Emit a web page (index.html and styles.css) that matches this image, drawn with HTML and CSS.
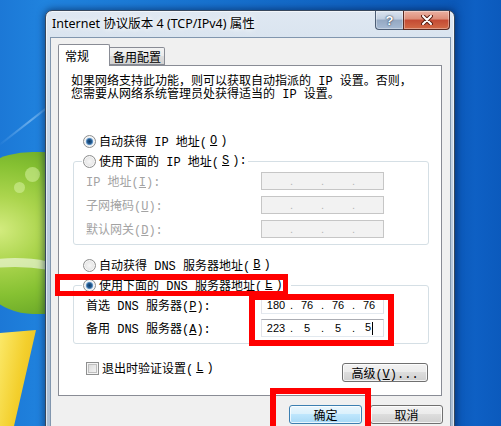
FILE: index.html
```html
<!DOCTYPE html>
<html lang="zh-CN">
<head>
    <meta charset="UTF-8">
    <title>Internet 协议版本 4 (TCP/IPv4) 属性</title>
    <link rel="stylesheet" href="styles.css">
</head>
<body>
    <div class="desktop">
        <!-- wallpaper pieces seen left of the window -->
        <div class="wallpaper">
            <div class="wp-streak"></div>
            <div class="wp-green"></div>
            <div class="wp-bubble b1"></div>
            <div class="wp-bubble b2"></div>
            <div class="wp-swirl"></div>
            <div class="wp-yellow"></div>
        </div>

        <div class="window">
            <div class="titlebar">
                <span class="title">Internet 协议版本 4 (TCP/IPv4) 属性</span>
                <div class="caption-buttons">
                    <button class="cap help">?</button>
                    <button class="cap close">
                        <svg width="12" height="10" viewBox="0 0 12 10">
                            <path d="M2 1 L10 9 M10 1 L2 9" stroke="#5a1e12" stroke-width="4" stroke-linecap="round"/>
                            <path d="M2 1 L10 9 M10 1 L2 9" stroke="#fff" stroke-width="2" stroke-linecap="round"/>
                        </svg>
                    </button>
                </div>
            </div>

            <div class="client">
                <div class="tabs">
                    <div class="tab active">常规</div>
                    <div class="tab">备用配置</div>
                </div>

                <div class="panel">
                    <p class="intro">如果网络支持此功能，则可以获取自动指派的 IP 设置。否则，<br>您需要从网络系统管理员处获得适当的 IP 设置。</p>

                    <label class="opt"><span class="radio on"></span>自动获得 IP 地址(<u>O</u>)</label>

                    <fieldset class="group">
                        <legend><label class="opt"><span class="radio"></span>使用下面的 IP 地址(<u>S</u>):</label></legend>
                        <div class="row disabled">
                            <span class="lbl">IP 地址(<u>I</u>):</span>
                            <span class="ip"><span class="seg"></span><span class="sep">.</span><span class="seg"></span><span class="sep">.</span><span class="seg"></span><span class="sep">.</span><span class="seg"></span></span>
                        </div>
                        <div class="row disabled">
                            <span class="lbl">子网掩码(<u>U</u>):</span>
                            <span class="ip"><span class="seg"></span><span class="sep">.</span><span class="seg"></span><span class="sep">.</span><span class="seg"></span><span class="sep">.</span><span class="seg"></span></span>
                        </div>
                        <div class="row disabled">
                            <span class="lbl">默认网关(<u>D</u>):</span>
                            <span class="ip"><span class="seg"></span><span class="sep">.</span><span class="seg"></span><span class="sep">.</span><span class="seg"></span><span class="sep">.</span><span class="seg"></span></span>
                        </div>
                    </fieldset>

                    <label class="opt opt-dns"><span class="radio"></span>自动获得 DNS 服务器地址(<u>B</u>)</label>

                    <fieldset class="group group-dns">
                        <legend><label class="opt"><span class="radio on"></span>使用下面的 DNS 服务器地址(<u>E</u>):</label></legend>
                        <div class="row">
                            <span class="lbl">首选 DNS 服务器(<u>P</u>):</span>
                            <span class="ip"><span class="seg">180</span><span class="sep">.</span><span class="seg">76</span><span class="sep">.</span><span class="seg">76</span><span class="sep">.</span><span class="seg">76</span></span>
                        </div>
                        <div class="row">
                            <span class="lbl">备用 DNS 服务器(<u>A</u>):</span>
                            <span class="ip"><span class="seg">223</span><span class="sep">.</span><span class="seg">5</span><span class="sep">.</span><span class="seg">5</span><span class="sep">.</span><span class="seg">5<i class="caret"></i></span></span>
                        </div>
                    </fieldset>

                    <div class="panel-foot">
                        <label class="check-opt"><span class="check"></span>退出时验证设置(<u>L</u>)</label>
                        <button class="btn btn-adv">高级(<u>V</u>)...</button>
                    </div>
                </div>

                <div class="buttons">
                    <button class="btn btn-ok">确定</button>
                    <button class="btn">取消</button>
                </div>
            </div>
        </div>

        <!-- red highlight marks drawn over the screenshot -->
        <div class="mark mark-radio"></div>
        <div class="mark mark-dns"></div>
        <div class="mark mark-ok"></div>
    </div>
</body>
</html>
```

FILE: styles.css
```css
* {
    box-sizing: border-box;
}

body {
    margin: 0;
    font-family: "Liberation Mono", "Noto Sans CJK SC", monospace;
    font-size: 12px;
    color: #000;
}

u {
    text-decoration: underline;
}

.desktop {
    position: relative;
    width: 501px;
    height: 426px;
    overflow: hidden;
    padding: 10px 0 0 45px;
    background: linear-gradient(90deg, #1c78d6 0, #2083de 45px, #0b58b8 455px, #0e60c4 475px, #0b5abd 100%);
}

/* wallpaper */
.wallpaper {
    position: absolute;
    inset: 0;
}

.wp-streak {
    position: absolute;
    left: -10px;
    top: 120px;
    width: 80px;
    height: 2px;
    transform: rotate(-38deg);
    background: linear-gradient(90deg, rgba(255, 255, 255, 0), rgba(190, 225, 255, 0.45), rgba(255, 255, 255, 0));
}

.wp-green {
    position: absolute;
    left: -30px;
    top: 152px;
    width: 140px;
    height: 162px;
    border-radius: 45% 50% 40% 45% / 25% 40% 35% 40%;
    background: radial-gradient(ellipse at 20% 48%, #d4ec80 0, #acd54e 28%, #86c132 55%, #5c9c22 90%);
}

.wp-bubble {
    position: absolute;
    border-radius: 50%;
    background: rgba(215, 242, 160, 0.55);
}

.wp-bubble.b1 {
    left: 25px;
    top: 167px;
    width: 15px;
    height: 15px;
}

.wp-bubble.b2 {
    left: 14px;
    top: 182px;
    width: 11px;
    height: 11px;
}

.wp-swirl {
    position: absolute;
    left: -70px;
    top: 258px;
    width: 170px;
    height: 90px;
    border-radius: 50%;
    border-top: 9px solid rgba(255, 255, 255, 0.55);
}

.wp-yellow {
    position: absolute;
    left: 0;
    top: 330px;
    width: 40px;
    height: 96px;
    clip-path: polygon(0 3px, 36px 0, 14px 96px, 0 96px);
    background: linear-gradient(100deg, #fbe96a 0, #f3cf2c 50%, #e8b51c 100%);
}

/* window */
.window {
    position: relative;
    z-index: 1;
    width: 410px;
    height: 440px;
    border: 1px solid #37475c;
    border-radius: 7px 7px 0 0;
    background: linear-gradient(#dfe8f2, #cad8e7 25%, #b5c7dc 60%, #a8bcd3);
    box-shadow: 0 0 7px 1px rgba(0, 20, 60, 0.55), inset 0 0 0 1px rgba(255, 255, 255, 0.6);
}

.titlebar {
    display: flex;
    justify-content: space-between;
    height: 26px;
}

.title {
    padding-left: 6px;
    line-height: 25px;
    font-family: "Noto Sans", "Noto Sans CJK SC", sans-serif;
    font-size: 12.5px;
    text-shadow: 0 0 5px #fff, 0 0 8px rgba(255, 255, 255, 0.8);
}

.caption-buttons {
    display: flex;
    height: 19px;
    margin-right: 4px;
}

.cap {
    height: 19px;
    padding: 0;
    border: 1px solid #4d5e75;
    border-top: none;
    display: flex;
    align-items: center;
    justify-content: center;
    box-shadow: inset 0 0 0 1px rgba(255, 255, 255, 0.35);
}

.help {
    width: 28px;
    border-radius: 0 0 0 4px;
    border-right: none;
    background: linear-gradient(#dbe4ef 0, #c0cee0 45%, #94a8c2 50%, #a6bad3 100%);
    color: #fff;
    font: bold 13px "Liberation Sans", sans-serif;
    text-shadow: 0 0 2px #2b3d55, 0 0 1px #2b3d55;
}

.close {
    width: 47px;
    border-radius: 0 0 4px 0;
    border-color: #5a2a22;
    background: linear-gradient(#eab1a3 0, #dd8d77 45%, #c44a33 50%, #d26a46 100%);
}

.client {
    margin: 0 3px 0 4px;
    height: 420px;
    padding: 6px 8px 0 7px;
    border: 1px solid #8196ae;
    background: #f0f0f0;
}

/* tabs */
.tabs {
    display: flex;
    align-items: flex-end;
    height: 21px;
}

.tab {
    display: flex;
    align-items: center;
    border: 1px solid #898c95;
    font-family: "Noto Sans CJK SC", sans-serif;
}

.tab.active {
    position: relative;
    z-index: 1;
    width: 52px;
    height: 22px;
    margin-bottom: -1px;
    padding-left: 6px;
    border-bottom: none;
    border-radius: 2px 2px 0 0;
    background: #fff;
}

.tab:not(.active) {
    width: 55px;
    height: 18px;
    justify-content: center;
    border-left: none;
    border-radius: 0 2px 0 0;
    background: linear-gradient(#f3f3f3, #ebebeb 50%, #dedede 50%, #d2d2d2);
}

.panel {
    width: 384px;
    height: 331px;
    border: 1px solid #898c95;
    background: #fff;
}

.intro {
    margin: 10px 0 0 12px;
    line-height: 13px;
}

.opt {
    display: flex;
    align-items: center;
    gap: 3px;
    height: 16px;
    margin-left: 24px;
}

.panel > .opt {
    margin-top: 31px;
}

.panel > .opt-dns {
    margin-top: 12px;
}

.radio {
    flex: none;
    width: 13px;
    height: 13px;
    border: 1px solid #8e8f8f;
    border-radius: 50%;
    background: radial-gradient(circle, #f6f6f6 0, #e6e6e6 60%, #d2d2d2 100%);
    box-shadow: inset 0 0 0 1px #f7f7f7;
}

.radio.on {
    background: radial-gradient(circle, #0e3a66 0, #245a8f 28%, #6a9ccc 42%, #e9eef3 52%, #e2e2e2 100%);
}

/* group boxes */
.group {
    width: 356px;
    min-width: 0;
    margin: 4px 0 0 14px;
    padding: 3px 0 6px;
    border: 1px solid #d5dfe5;
    border-radius: 3px;
}

.group legend {
    margin-left: 8px;
    padding: 0 1px;
}

.group legend .opt {
    margin: 0;
}

.row {
    display: flex;
    align-items: center;
    height: 18px;
    padding-left: 12px;
}

.row + .row {
    margin-top: 6px;
}

.group-dns .row + .row {
    margin-top: 5px;
}

.lbl {
    width: 175px;
}

.disabled .lbl {
    color: #a3a3a3;
}

.ip {
    display: flex;
    align-items: center;
    width: 123px;
    height: 18px;
    padding-left: 2px;
    border: 1px solid;
    border-color: #abadb3 #dbdfe6 #e3e9ef #e2e3ea;
    background: #fff;
    font-family: "Liberation Sans", sans-serif;
    font-size: 11px;
}

.seg {
    width: 24px;
    text-align: center;
}

.sep {
    width: 7px;
    text-align: center;
}

.disabled .ip {
    border-color: #c6c6c6;
    background: #f2f2f2;
    color: #b5b5b5;
}

.caret {
    display: inline-block;
    width: 1px;
    height: 13px;
    margin-left: 1px;
    vertical-align: middle;
    background: #000;
}

.panel-foot {
    display: flex;
    justify-content: space-between;
    align-items: flex-start;
    margin-top: 16px;
}

.check-opt {
    display: flex;
    align-items: center;
    gap: 3px;
    height: 16px;
    margin-left: 27px;
}

.check {
    width: 13px;
    height: 13px;
    border: 1px solid #8e8f8f;
    background: linear-gradient(135deg, #d6d6d6, #f8f8f8);
    box-shadow: inset 0 0 0 1px #f4f4f4, inset 0 0 0 2px #bfbfbf;
}

/* buttons */
.btn {
    width: 73px;
    height: 19px;
    padding: 0;
    border: 1px solid #707070;
    border-radius: 3px;
    background: linear-gradient(#f2f2f2 0, #ebebeb 50%, #dddddd 50%, #cfcfcf 100%);
    box-shadow: inset 0 0 0 1px rgba(255, 255, 255, 0.75);
    font: inherit;
    color: #000;
}

.btn-adv {
    width: 86px;
    margin: 3px 13px 0 0;
}

.btn-ok {
    border-color: #3c7fb1;
    background: linear-gradient(#eaf6fd 0, #d9f0fc 50%, #bee6fd 50%, #a7d9f5 100%);
}

.buttons {
    display: flex;
    justify-content: flex-end;
    gap: 8px;
    margin: 9px -1px 0 0;
}

/* red annotations */
.mark {
    position: absolute;
    z-index: 2;
    border: 6px solid #f00;
}

.mark-radio {
    left: 55px;
    top: 274px;
    width: 233px;
    height: 22px;
    border-width: 6px 5px 5px;
}

.mark-dns {
    left: 249px;
    top: 294px;
    width: 145px;
    height: 52px;
}

.mark-ok {
    left: 270px;
    top: 388px;
    width: 101px;
    height: 60px;
}
```
